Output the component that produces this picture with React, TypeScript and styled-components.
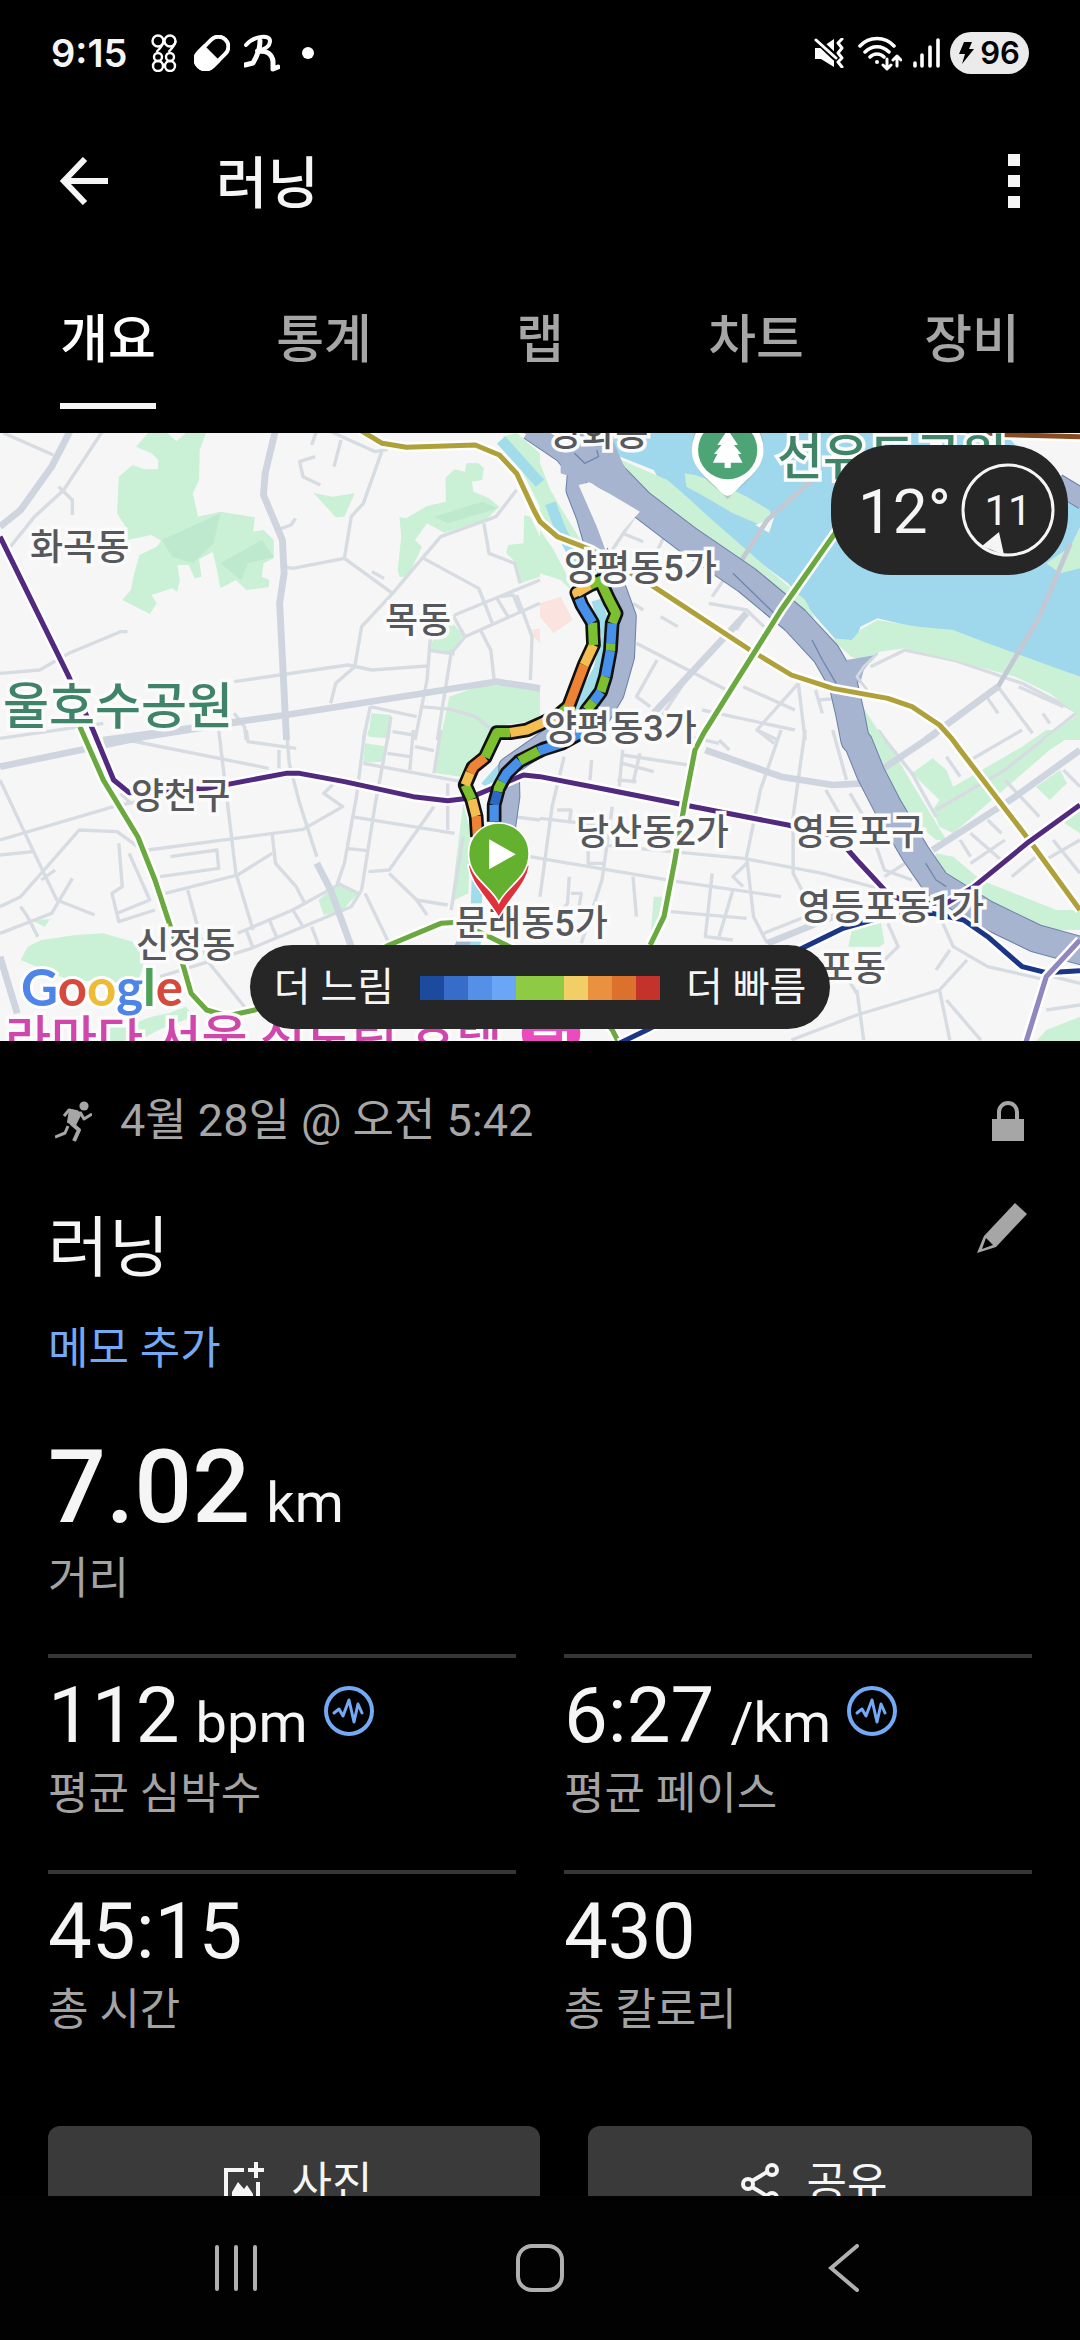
import React from "react";
import styled, { createGlobalStyle } from "styled-components";

const GlobalStyle = createGlobalStyle`
  *, *::before, *::after { box-sizing: border-box; }
  body {
    margin: 0;
    background: #000;
    color: #f5f5f5;
    font-family: Roboto, "Noto Sans CJK KR", sans-serif;
  }
  button { font: inherit; color: inherit; background: none; border: 0; padding: 0; margin: 0; }
  svg { display: block; }
`;

const Screen = styled.div`
  display: flex;
  flex-direction: column;
  height: 100vh;
  overflow: hidden;
  background: #000;
`;

/* ---------- status bar ---------- */

const StatusBar = styled.div`
  display: flex;
  align-items: center;
  justify-content: space-between;
  flex: none;
  height: 106px;
  padding: 0 51px;
`;

const StatusGroup = styled.div<{ $gap: number }>`
  display: flex;
  align-items: center;
  gap: ${(p) => p.$gap}px;
`;

const Clock = styled.time`
  width: 85px;
  font: 600 38px/48px Inter, Roboto, sans-serif;
`;

const Battery = styled.div`
  display: flex;
  align-items: center;
  justify-content: center;
  gap: 6px;
  width: 79px;
  height: 42px;
  border-radius: 21px;
  background: #ebebeb;
  color: #000;
  font: 600 31px/42px Inter, Roboto, sans-serif;
`;

/* ---------- header and tabs ---------- */

const Header = styled.header`
  display: flex;
  align-items: center;
  flex: none;
  height: 150px;
  padding: 0 48px;
`;

const IconButton = styled.button`
  display: flex;
  align-items: center;
  justify-content: center;
  flex: none;
`;

const BackButton = styled(IconButton)`
  width: 72px;
  height: 72px;
`;

const MoreButton = styled(IconButton)`
  flex-direction: column;
  gap: 9px;
  width: 36px;
  height: 72px;
`;

const Square = styled.span`
  width: 12px;
  height: 12px;
  background: #f5f5f5;
`;

const ScreenTitle = styled.h1`
  flex: 1;
  margin: 0 0 0 96px;
  padding-top: 5px;
  font-size: 56px;
  line-height: 72px;
  font-weight: 500;
`;

const Tabs = styled.nav`
  display: grid;
  grid-template-columns: repeat(5, 1fr);
  justify-items: center;
  flex: none;
  height: 177px;
  padding-top: 49px;
`;

const Tab = styled.button<{ $active?: boolean }>`
  display: flex;
  flex-direction: column;
  height: 104px;
  font-size: 52px;
  line-height: 72px;
  font-weight: 500;
  color: ${(p) => (p.$active ? "#fff" : "#a6a6a6")};
  border-bottom: 6px solid ${(p) => (p.$active ? "#f5f5f5" : "transparent")};
`;

/* ---------- map ---------- */

const Scroll = styled.main`
  flex: 1;
  min-height: 0;
  overflow: hidden;
`;

const MapBox = styled.section`
  position: relative;
  width: 100%;
  aspect-ratio: 1080 / 608;
  overflow: hidden;
  background: #f6f6f7;
`;

const MapDrawing = styled.svg`
  width: 100%;
  height: 100%;
`;

type LabelKind = "area" | "park" | "hotel";

const labelColors: Record<LabelKind, string> = {
  area: "#57585c",
  park: "#3f8468",
  hotel: "#cf46ac",
};

const MapLabel = styled.span<{ $x: number; $y: number; $kind: LabelKind }>`
  position: absolute;
  left: ${(p) => (p.$x / 1080) * 100}%;
  top: ${(p) => (p.$y / 608) * 100}%;
  transform: translateY(-50%);
  white-space: nowrap;
  font-size: ${(p) => (p.$kind === "area" ? 36 : 50)}px;
  line-height: 1;
  font-weight: 500;
  color: ${(p) => labelColors[p.$kind]};
  -webkit-text-stroke: 7px #fbfbfb;
  paint-order: stroke fill;
`;

const GoogleMark = styled.div`
  position: absolute;
  left: 21px;
  bottom: 22px;
  font: 700 51px/64px Lato, sans-serif;
  -webkit-text-stroke: 6px #fff;
  paint-order: stroke fill;
`;

const Letter = styled.span<{ $color: string }>`
  color: ${(p) => p.$color};
`;

const Weather = styled.div`
  position: absolute;
  top: 12px;
  right: 12px;
  display: flex;
  align-items: center;
  justify-content: space-between;
  width: 237px;
  height: 130px;
  padding: 0 12px 0 27px;
  border-radius: 60px;
  background: #262626;
`;

const Temperature = styled.span`
  padding-top: 4px;
  font-size: 62px;
  line-height: 72px;
`;

const Wind = styled.div`
  position: relative;
  display: flex;
  align-items: center;
  justify-content: center;
  width: 96px;
  height: 96px;
  padding-top: 2px;
  font-size: 42px;
  line-height: 48px;

  svg {
    position: absolute;
    inset: 0;
  }
`;

const Legend = styled.div`
  position: absolute;
  left: 50%;
  bottom: 12px;
  transform: translateX(-50%);
  display: flex;
  align-items: center;
  justify-content: center;
  gap: 26px;
  width: 580px;
  height: 84px;
  padding-top: 2px;
  border-radius: 42px;
  background: #262626;
  font-size: 40px;
  line-height: 48px;
  white-space: nowrap;
`;

const Scale = styled.div`
  display: flex;
`;

const Step = styled.span<{ $color: string }>`
  width: 24px;
  height: 24px;
  background: ${(p) => p.$color};
`;

const paceColors = [
  "#1b4a9e", "#376dc9", "#5590e8", "#6aa5f6", "#8fca45",
  "#8fca45", "#f2cf66", "#ea913f", "#dc712e", "#c4322c",
];

/* The map is drawn in four tiles; each run of points is local to one tile. */
const tileOrigin = [[0, -9], [1568, -9], [0, 891], [1568, 891]];
type Run = [number, string];

const trace = (...runs: Run[]) =>
  runs
    .map(([tile, points]) =>
      points
        .split(" ")
        .map((pair) => {
          const [x, y] = pair.split(",").map(Number);
          return `${x + tileOrigin[tile][0]},${y + tileOrigin[tile][1]}`;
        })
        .join(" ")
    )
    .join(" ");

const parks: Run[] = [
  [0, "430,9 395,50 440,70 460,90 458,118 420,118 385,105 345,140 340,250 365,290 370,330 440,315 468,332 455,350 405,375 390,430 380,480 355,510 435,552 455,520 440,495 500,475 515,485 522,450 515,405 548,405 565,445 585,440 578,388 618,365 630,420 640,475 685,450 715,480 780,472 782,450 760,440 765,400 795,385 795,330 765,300 735,305 740,262 640,245 575,260 560,190 578,150 580,60 598,9 540,9 512,34 485,9"],
  [0, "910,188 965,200 1030,190 1000,260 975,262"],
  [0, "1160,262 1180,265 1240,228 1295,215 1293,145 1320,118 1350,125 1355,100 1390,100 1405,115 1400,150 1370,155 1375,185 1420,205 1450,230 1410,270 1290,308 1240,280 1205,330 1225,350 1185,440 1160,440 1155,420 1165,320"],
  [0, "1522,255 1540,260 1568,320 1568,440 1510,460 1490,390 1470,370 1475,345 1520,340"],
  [0, "1310,575 1345,615 1310,670 1250,660 1258,625"],
  [0, "1305,800 1400,765 1568,770 1568,870 1430,890 1400,930 1278,930"],
  [0, "1078,850 1135,855 1130,925 1070,920"],
  [0, "1460,20 1500,9 1568,70 1568,230 1500,90"],
  [1, "0,100 30,180 70,250 130,350 70,335 30,310 0,260"],
  [1, "0,300 40,360 75,430 90,480 60,450 0,430"],
  [2, "1278,0 1425,0 1385,90 1340,140 1265,130"],
  [2, "1070,0 1120,0 1118,22 1066,16"],
  [2, "1060,40 1115,48 1112,95 1055,98"],
  [2, "985,458 1040,490 990,545 940,555 925,510"],
  [2, "60,690 80,650 120,630 220,615 300,610 400,640 420,690 400,760 200,750 130,720"],
  [2, "90,570 145,568 130,590"],
  [2, "390,880 440,860 490,850 540,830 560,860 460,900 400,934"],
  [2, "320,870 390,870 390,934 320,934"],
  [2, "1345,220 1365,300 1360,490 1310,515"],
  [3, "1080,130 1140,85 1180,120 1200,170 1400,50 1470,0 1568,0 1480,60 1200,310 1160,290 1140,240 1160,210"],
  [3, "1440,170 1510,120 1530,160 1480,210"],
  [3, "1150,370 1200,380 1280,450 1500,540 1568,540 1568,600 1440,600 1280,500 1140,400"],
  [3, "945,0 990,0 1080,160 1180,330 1150,330 1050,240 985,120"],
  [3, "910,580 990,575 1000,640 985,650 895,650"],
  [3, "1470,900 1568,860 1568,935 1440,935"],
  [3, "1510,270 1568,240 1568,310"],
  [3, "330,500 355,500 340,600 320,640"],
];

const riverParks: Run[] = [
  [1, "215,80 370,150 415,190 500,270 600,360 700,450 770,510 800,570 700,490 560,390 400,300 280,180"],
  [1, "420,130 450,135 520,160 600,200 665,240 675,260 640,285 560,250 470,195 425,170"],
  [1, "930,600 980,570 1100,590 1200,600 1300,640 1568,740 1568,860 1480,790 1380,740 1200,690 1060,655 985,665 960,700 905,680 860,640 850,625 905,630"],
  [1, "1568,290 1540,350 1470,400 1510,430 1568,415"],
  [1, "930,820 1000,930 945,930"],
  [1, "1568,850 1500,900 1460,930 1568,930"],
];

const parkShades: Run[] = [
  [0, "470,330 640,250 620,340 560,400 500,380"],
  [0, "640,400 760,330 795,380 720,400 700,450"],
  [0, "1260,260 1400,215 1445,235 1300,280"],
];

const wideRoads: Run[] = [
  [0, "205,0 150,110 60,240 0,290"],
  [0, "800,0 770,130 765,195 820,330 825,430 812,520 832,930"],
  [0, "300,930 830,855 1230,790 1440,755 1568,775"],
  [2, "0,110 420,20 700,-25"],
  [3, "480,60 700,140 850,165 940,160"],
  [1, "600,550 330,850"],
  [1, "1330,770 1120,930"],
  [3, "990,120 1150,10"],
  [3, "1140,360 1380,200 1568,60"],
  [2, "0,680 50,850"],
  [2, "920,400 960,480 1020,650"],
  [3, "660,640 900,540"],
];

const roads: Run[] = [
  [0, "10,9 155,75"], [0, "300,0 185,180 100,260 30,350"], [0, "170,170 210,210 210,255"],
  [0, "1110,60 1055,220 1020,260 1000,385 850,415 825,410"],
  [0, "1000,385 1140,490 1050,590 1030,710 975,760 960,820"],
  [0, "950,0 1090,65 1125,58"], [0, "990,30 970,110"], [0, "915,80 870,95 880,140 930,165"], [0, "905,45 920,0"],
  [0, "1500,180 1440,260 1280,320 1230,380 1140,490"], [0, "1230,385 1390,475 1430,580"],
  [0, "1405,280 1420,370 1495,400 1510,460"], [0, "1320,555 1568,450"], [0, "1350,620 1568,520"],
  [0, "1315,555 1350,620 1310,670 1285,830 1270,930"], [0, "1250,620 1240,750 1205,930"],
  [0, "0,730 115,720 200,670 350,605 370,605"], [0, "680,755 1010,705 1080,720 1240,708"],
  [0, "1395,600 1425,660 1435,750"], [0, "1500,495 1545,620 1540,750"], [0, "1440,500 1475,560"],
  [0, "1455,500 1490,495 1510,545"], [0, "1250,662 1320,672"], [0, "810,298 845,285 858,265"],
  [0, "1080,425 1115,445"], [0, "1075,830 1210,860"], [0, "1075,830 1055,930"], [0, "1135,860 1125,930"],
  [0, "1220,830 1310,838 1380,860 1430,900"], [0, "1140,905 1200,915"], [0, "680,850 710,890 715,930"], [0, "0,925 300,880"],
  [2, "832,0 840,100 870,220 920,380"], [2, "0,150 100,370 165,510 275,555"], [2, "0,330 330,230 420,210"],
  [2, "0,375 95,365"], [2, "0,530 60,500 230,300 340,305 400,350"], [2, "430,360 880,298 995,230 940,190 980,150"],
  [2, "635,0 685,430 735,600"], [2, "370,30 780,115"], [2, "810,60 810,115"], [2, "715,0 720,35 860,55"],
  [2, "495,380 630,360 635,415 465,440"], [2, "480,490 690,435 790,370"], [2, "790,310 800,400 860,470 885,520"],
  [2, "345,340 355,470 325,490 345,575 450,540"], [2, "375,370 435,510 340,550"], [2, "545,480 600,690 710,830"],
  [2, "690,610 850,540 990,460"], [2, "465,740 730,655 880,590 1020,530 1050,480"], [2, "0,610 100,570 150,550 210,445"],
  [2, "60,530 80,560 110,620"], [2, "160,420 120,450"], [2, "1060,0 1035,200 1000,400 980,460 1040,490"],
  [2, "1130,0 1090,220 1050,480"], [2, "1200,0 1190,120"], [2, "1280,0 1260,130"], [2, "1055,100 1340,155"],
  [2, "1020,260 1320,310"], [2, "1005,355 1065,362"], [2, "1125,70 1190,80"], [2, "1205,50 1260,62"],
  [2, "1070,425 1130,420 1260,230"], [2, "1130,430 1210,510 1300,525"], [2, "1060,490 1130,640"], [2, "1300,160 1300,300"],
  [2, "1345,320 1310,540"], [2, "1210,510 1240,555"], [2, "780,565 805,625"], [2, "850,540 880,590"], [2, "715,600 735,655"],
  [2, "905,590 925,645"], [2, "380,220 350,190"], [2, "1490,260 1568,270"], [2, "1540,380 1568,385"],
  [1, "280,250 210,360"], [1, "365,310 290,470"], [1, "240,310 300,335"], [1, "500,500 540,440"],
  [1, "280,640 560,790"], [1, "340,690 280,800 320,830"], [1, "430,740 340,880"], [1, "590,770 740,840"],
  [1, "470,840 740,900"], [1, "750,760 770,930"], [1, "750,760 630,900 690,930"], [1, "350,560 400,590"],
  [1, "800,780 820,850"], [1, "810,810 860,805"], [1, "960,710 1060,660 1200,690 1400,760 1568,850"],
  [1, "1330,770 1430,910"], [1, "1390,770 1520,830"], [1, "1290,790 1330,850"], [1, "1460,850 1480,880"],
  [1, "490,520 600,540 650,590"], [1, "1480,30 1500,120 1568,130"], [1, "270,520 300,540"], [1, "600,550 570,600"],
  [3, "770,0 735,260 735,430 765,490"], [3, "700,0 640,180 600,380 620,560 660,640"], [3, "600,400 560,440 590,470"],
  [3, "630,0 680,40"], [3, "70,80 35,230 0,500"], [3, "240,60 230,170"], [3, "290,70 270,160"], [3, "210,230 180,450 120,640"],
  [3, "0,265 210,290"], [3, "0,385 400,455 700,500"], [3, "130,340 590,385 820,430 1000,480"], [3, "140,350 140,400 190,400"],
  [3, "270,440 280,560"], [3, "500,430 480,620 560,630"], [3, "560,480 520,620"], [3, "380,545 600,565"],
  [3, "240,75 430,105"], [3, "240,100 330,125"], [3, "225,150 280,155"], [3, "150,90 145,150"], [3, "85,440 80,520 50,560"],
  [3, "90,490 120,490 110,550"], [3, "50,240 90,240 85,280"], [3, "650,610 770,560"], [3, "830,180 880,270"],
  [3, "850,0 890,150"], [3, "900,190 940,260"], [3, "960,300 1000,420 1080,450"], [3, "1000,440 1060,400"],
  [3, "1170,580 1200,650 1300,710 1470,750"], [3, "1240,690 1160,780 920,855 730,930"], [3, "920,780 940,930"],
  [3, "1160,780 1190,930"], [3, "1180,810 1280,930"], [3, "890,740 920,790"], [3, "1490,740 1568,760"], [3, "1470,840 1568,825"],
  [3, "1010,580 1040,650 1000,690"], [3, "1190,660 1150,720"], [3, "980,0 1080,130 1150,260"], [3, "1150,240 1350,120 1568,-60"],
  [3, "1250,90 1400,0"], [3, "1180,80 1220,140"], [3, "1220,330 1250,380"], [3, "1250,310 1350,400"], [3, "1300,270 1340,310"],
  [3, "1350,330 1250,400"], [3, "1350,150 1450,260"], [3, "1450,400 1568,330"], [3, "1490,330 1568,430"],
  [3, "1520,120 1568,170"], [3, "1370,440 1440,380"], [3, "520,30 550,60"], [3, "430,20 520,40"],
];

const expressways: Run[][] = [
  [[1, "150,70 215,140 290,220 430,330 600,450 740,570 830,670 880,760 900,850 915,930"], [3, "925,40 960,130 1010,230 1090,370 1150,460 1290,550 1440,625 1600,670"]],
  [[1, "-30,0 70,70 110,120 105,180 135,260 160,350 215,460 250,560 245,680 215,790 175,860"], [3, "60,0 -20,60 -90,110"], [2, "1480,200 1465,310"]],
  [[1, "1500,160 1580,210"]],
];

const creek: Run[] = [
  [0, "1455,30 1568,160"], [1, "30,220 60,300 110,400"], [1, "165,510 195,620 170,720 110,830 0,900"],
  [2, "1540,60 1470,100 1410,170"], [2, "1390,280 1380,640 1370,700"],
];

const subways: { color: string; runs: Run[] }[] = [
  { color: "#69a93f", runs: [[0, "228,890"], [2, "232,-10 300,150 400,320 450,450 495,590 530,700 555,790 600,840 660,858 740,840 1000,720 1130,645 1280,580 1330,577 1400,610 1480,650"], [3, "100,760 210,900 230,940"]] },
  { color: "#b0a03a", runs: [[0, "1045,0 1110,40 1180,52 1380,45 1450,75 1500,130 1550,240"], [1, "0,275 50,320 150,360 330,470 610,660 730,735 850,775 1010,805 1080,830 1160,885 1195,925"], [3, "1220,60 1420,330 1568,540"]] },
  { color: "#512a80", runs: [[0, "0,320 200,740 270,900"], [2, "290,50 330,150 375,188 600,175 830,130 870,130 1000,155 1200,200 1300,212 1360,205 1440,170 1520,135"], [3, "0,140 200,180 420,225 720,285 860,320 920,390 1010,490 1070,520 1180,520 1260,470 1420,335 1568,225"]] },
  { color: "#69a93f", runs: [[1, "870,290 700,540 560,770 475,910"], [3, "450,60 420,220 390,400 360,560 320,645"]] },
  { color: "#1c3686", runs: [[3, "230,940 310,900 770,650 880,595 1000,560 1140,550 1230,570 1300,620 1400,710 1470,728 1568,722"]] },
  { color: "#8f87bd", runs: [[3, "1410,940 1470,740 1568,630"]] },
  { color: "#8a4a20", runs: [[1, "1200,-2 1350,14 1568,20"]] },
];

const G = "#7cc02f";
const B = "#4791ea";
const Y = "#f4bf50";
const O = "#ec8434";

const routeOutline =
  "142,860 138,800 125,750 105,705 128,652 165,622 200,548 240,548 290,540 330,522 385,495 415,470 462,345 490,285 487,218 455,165 440,128 480,105 510,92 537,150 558,190 546,220 541,300 526,380 512,425 490,455 470,480 440,555 395,580 340,597 268,633 230,670 205,715 192,765 192,815";

const routeSegments: [string, string][] = [
  [O, "142,860 138,798"], [Y, "138,798 125,748"], [G, "125,748 105,705"], [Y, "105,705 120,668"], [O, "120,668 130,650 165,622"],
  [G, "165,622 200,548 240,548"], [Y, "240,548 290,540 330,522 385,495"], [G, "385,495 415,470"], [O, "415,470 462,345"],
  [Y, "462,345 490,285"], [G, "490,285 487,218"], [B, "487,218 455,165 447,145"], [Y, "445,138 440,128 480,105"],
  [G, "480,105 510,92 537,150 558,190 546,220"], [B, "546,220 542,280"], [G, "542,280 541,302"], [B, "541,302 526,380"],
  [G, "526,380 512,425"], [B, "512,425 490,455"], [G, "490,455 470,480"], [B, "470,480 440,555 395,580 325,603"],
  [G, "325,603 268,633"], [B, "268,633 230,670 215,695"], [G, "215,695 205,715 203,725"], ["#2d68c4", "203,725 192,765"], [B, "192,765 192,815"],
];

const areaLabels: [string, number, number, LabelKind][] = [
  ["화곡동", 30, 115, "area"],
  ["목동", 385, 188, "area"],
  ["울호수공원", 3, 274, "park"],
  ["양천구", 131, 364, "area"],
  ["신정동", 136, 513, "area"],
  ["라마다 서울 신도림 호텔", 5, 607, "hotel"],
  ["선유도공원", 777, 25, "park"],
  ["양화동", 549, 1, "area"],
  ["양평동5가", 564, 136, "area"],
  ["양평동3가", 544, 296, "area"],
  ["당산동2가", 576, 400, "area"],
  ["영등포구", 792, 400, "area"],
  ["영등포동1가", 798, 475, "area"],
  ["문래동5가", 455, 491, "area"],
  ["포동", 820, 536, "area"],
];

const Polygons = ({ shapes, fill }: { shapes: Run[]; fill: string }) => (
  <g fill={fill}>
    {shapes.map((s, i) => (
      <polygon key={i} points={trace(s)} />
    ))}
  </g>
);

const Lines = ({ lines, color, width }: { lines: Run[]; color: string; width: number }) => (
  <g stroke={color} strokeWidth={width} fill="none" strokeLinejoin="round">
    {lines.map((s, i) => (
      <polyline key={i} points={trace(s)} />
    ))}
  </g>
);

const RouteMap = () => (
  <MapDrawing viewBox="0 0 3136 1824" preserveAspectRatio="none" aria-hidden="true">
    <Polygons shapes={parks} fill="#caf0d6" />
    <Polygons shapes={parkShades} fill="#bfe9ce" />
    <Polygons shapes={[[0, "1460,740 1568,720 1568,690 1500,700"]]} fill="#f6f6f7" />
    <Polygons shapes={[[0, "1545,600 1568,595 1568,640 1550,620"], [1, "0,520 60,500 95,570 40,610 0,560"]]} fill="#fbe3df" />
    <Lines lines={roads} color="#d7dce2" width={10} />
    <Lines lines={wideRoads} color="#ced5de" width={20} />
    <Polygons
      shapes={[[1, "180,0 1568,0 1568,740 1300,650 1100,595 980,565 930,590 905,680 860,630 800,560 720,460 500,290 370,190 330,120 220,75"]]}
      fill="#9fd8ec"
    />
    <Polygons shapes={[[1, "1340,0 1568,0 1568,230 1500,180"]]} fill="#f6f6f7" />
    <Polygons shapes={riverParks} fill="#caf0d6" />
    <Polygons shapes={[[1, "625,285 680,262 665,308"]]} fill="#f6f6f7" />
    <Lines lines={[[1, "580,400 660,270 790,150"], [1, "1540,340 1450,560 1330,770"]]} color="#c3c8d3" width={14} />
    <Lines lines={creek} color="#a1dcea" width={32} />
    <g fill="none" strokeLinejoin="round">
      {expressways.map((runs, i) => (
        <polyline key={i} points={trace(...runs)} stroke="#6d81a8" strokeWidth={i === 0 ? 86 : 62} />
      ))}
      {expressways.map((runs, i) => (
        <polyline key={i} points={trace(...runs)} stroke="#a6b4d0" strokeWidth={i === 0 ? 80 : 56} />
      ))}
    </g>
    <Polygons shapes={[[1, "-60,0 200,0 240,100 290,190 250,230 150,160 60,130 60,80"], [1, "890,690 975,675 940,720 930,760 900,740"]]} fill="#a6b4d0" />
    <Polygons shapes={[[1, "112,165 140,158 200,190 290,245 190,360 165,290"]]} fill="#f6f6f7" />
    <Lines lines={[[1, "560,430 620,490 680,550"], [1, "790,630 820,690 860,760"], [3, "1120,400 1150,450 1180,470"], [1, "100,70 130,100 170,80 165,60"]]} color="#7286ad" width={4} />
    <Lines lines={[[1, "950,780 920,740 940,710 980,670"]]} color="#d3d9e0" width={8} />
    <Polygons shapes={[[2, "1340,600 1400,520 1360,660 1310,670"]]} fill="#a6b4d0" />
    {subways.map((line, i) => (
      <g key={i} fill="none" strokeLinejoin="round">
        <polyline points={trace(...line.runs)} stroke="#fff" strokeWidth={30} />
        <polyline points={trace(...line.runs)} stroke={line.color} strokeWidth={15} />
      </g>
    ))}
    <g transform="translate(1249 351) scale(0.968 1)" fill="none" strokeLinejoin="round">
      <polyline points={routeOutline} stroke="#111" strokeWidth={44} />
      {routeSegments.map(([color, points], i) => (
        <polyline key={i} points={points} stroke={color} strokeWidth={28} />
      ))}
    </g>
    <path d="M2113 199c-20 -30 -104 -70 -104 -160a104 108 0 0 1 208 0c0 90 -84 130 -104 160z" fill="#9aa" opacity=".5" />
    <path d="M2113 188c-12 0 -22 -12 -34 -26C2050 130 2009 105 2009 50a104 108 0 0 1 208 0c0 55 -41 80 -70 112c-12 14 -22 26 -34 26z" fill="#fff" />
    <ellipse cx="2113" cy="51" rx="86" ry="88" fill="#4da576" />
    <path d="M2113 -10l-30 46h12l-22 27h10l-13 26h34v16h18v-16h34l-13 -26h10l-22 -27h12z" fill="#fff" />
    <ellipse cx="1600" cy="1800" rx="85" ry="85" fill="#ea4cc0" />
    <path d="M1550 1795h65v12h-65zM1632 1795h14v40h-14z" fill="#fff" />
  </MapDrawing>
);

const PinLayer = styled(MapDrawing)`
  position: absolute;
  inset: 0;
`;

const StartPin = () => (
  <PinLayer viewBox="0 0 3136 1824" preserveAspectRatio="none" aria-hidden="true">
    <g transform="translate(1249 351) scale(0.968 1)" stroke="#fff" strokeWidth={5}>
      <path d="M113 945C122 1000 160 1030 206 1103C250 1030 290 1000 299 945Z" fill="#e0303c" />
      <path d="M206 1058C180 1005 115 985 115 910a91 91 0 0 1 182 0C297 985 232 1005 206 1058Z" fill="#63b12e" />
      <path d="M177 868v90l80 -45z" fill="#fff" stroke="none" />
    </g>
  </PinLayer>
);

/* ---------- activity details ---------- */

const Details = styled.section`
  display: flex;
  flex-direction: column;
  padding: 50px 48px 0;
`;

const DateRow = styled.div`
  display: flex;
  align-items: center;
  gap: 28px;
  height: 60px;
  padding: 0 8px 0 7px;
  font-size: 45px;
  line-height: 60px;
  color: #a6a6a6;

  time { flex: 1; }
`;

const TitleRow = styled.div`
  display: flex;
  align-items: flex-start;
  justify-content: space-between;
  height: 92px;
  margin-top: 52px;
  padding-right: 5px;
`;

const ActivityName = styled.h2`
  margin: 0;
  font-size: 66px;
  line-height: 92px;
  font-weight: 400;
`;

const MemoLink = styled.a`
  align-self: flex-start;
  margin-top: 24px;
  font-size: 44px;
  line-height: 60px;
  color: #74a9f5;
  text-decoration: none;
`;

const Stats = styled.dl`
  display: grid;
  grid-template-columns: 1fr 1fr;
  column-gap: 48px;
  margin: 0;
`;

const Stat = styled.div<{ $main?: boolean }>`
  display: flex;
  flex-direction: column;
  grid-column: ${(p) => (p.$main ? "1 / -1" : "auto")};
  height: ${(p) => (p.$main ? 275 : 216)}px;
  padding-top: ${(p) => (p.$main ? 46 : 10)}px;
  border-top: ${(p) => (p.$main ? "0" : "4px solid #363636")};
`;

const Value = styled.dd<{ $main?: boolean }>`
  display: flex;
  align-items: baseline;
  gap: 16px;
  order: 1;
  margin: 0;
  font-size: ${(p) => (p.$main ? 102 : 78)}px;
  line-height: ${(p) => (p.$main ? 124 : 96)}px;
  font-weight: ${(p) => (p.$main ? 500 : 400)};
`;

const Unit = styled.span`
  font-size: 56px;
  line-height: 60px;
  font-weight: 400;
`;

const Caption = styled.dt`
  order: 2;
  font-size: 44px;
  line-height: 60px;
  color: #a3a3a3;
`;

const ZoneIcon = styled.svg`
  align-self: flex-start;
  margin-top: 18px;
`;

const Actions = styled.div`
  display: grid;
  grid-template-columns: 492fr 444fr;
  gap: 48px;
  margin-top: 40px;
`;

const Action = styled.button`
  display: flex;
  align-items: center;
  justify-content: center;
  gap: 28px;
  height: 116px;
  padding-left: 8px;
  border-radius: 12px;
  background: #3a3a3a;
  font-size: 44px;
  line-height: 60px;
`;

/* ---------- system navigation ---------- */

const SystemNav = styled.nav`
  display: grid;
  grid-template-columns: repeat(3, 1fr);
  justify-items: center;
  align-items: center;
  flex: none;
  height: 144px;
  padding: 0 84px;
  background: #020202;
`;

const Zone = () => (
  <ZoneIcon width="50" height="50" viewBox="0 0 50 50" fill="none" stroke="#74a9f5" aria-hidden="true">
    <circle cx="25" cy="25" r="23" strokeWidth="4" />
    <path d="M10 27l5-4 4 7 6-16 5 22 4-18 4 9" strokeWidth="3" strokeLinejoin="round" strokeLinecap="round" />
  </ZoneIcon>
);

type StatData = { label: string; value: string; unit?: string; zone?: boolean; main?: boolean };

const stats: StatData[] = [
  { label: "거리", value: "7.02", unit: "km", main: true },
  { label: "평균 심박수", value: "112", unit: "bpm", zone: true },
  { label: "평균 페이스", value: "6:27", unit: "/km", zone: true },
  { label: "총 시간", value: "45:15" },
  { label: "총 칼로리", value: "430" },
];

export default function App() {
  return (
    <Screen>
      <GlobalStyle />
      <StatusBar>
        <StatusGroup $gap={14}>
          <Clock>9:15</Clock>
          <svg width="30" height="38" viewBox="0 0 30 38" fill="none" stroke="#fff" strokeWidth="2.4">
            <circle cx="8" cy="7" r="5.5" />
            <circle cx="20" cy="7" r="5.5" />
            <path d="M13.500 7c0 4-4 8-7 11M25.500 7c0 4-4 8-7 11" />
            <circle cx="8" cy="23" r="4" />
            <circle cx="20" cy="23" r="4" />
            <circle cx="8" cy="32" r="5" />
            <circle cx="20" cy="32" r="5" />
          </svg>
          <svg width="36" height="36" viewBox="0 0 36 36" fill="none">
            <g transform="rotate(45 18 18)">
              <rect x="8" y="-1" width="20" height="38" rx="10" stroke="#fff" strokeWidth="4" />
              <path d="M6 18h24v9a12 12 0 0 1-24 0z" fill="#fff" />
            </g>
          </svg>
          <svg width="36" height="38" viewBox="2 0 36 38" fill="none" stroke="#fff" strokeWidth="4" strokeLinecap="round" strokeLinejoin="round">
            <path d="M4 11C12 2 28 0 28 7c0 6-7 9-13 10" />
            <path d="M18 7c0 8-4 17-7 22l-8 2M17 17c10 0 13 4 14 10 0 4 0 6 0 8l5-2" strokeWidth="5" />
          </svg>
          <svg width="24" height="12" viewBox="0 0 24 12">
            <circle cx="14" cy="6" r="6" fill="#fff" />
          </svg>
        </StatusGroup>
        <StatusGroup $gap={10}>
          <svg width="34" height="30" viewBox="0 0 34 30" fill="#fff">
            <path d="M1 10h6L20 1v28L7 21H1z" />
            <path d="M2 1l20 19" stroke="#000" strokeWidth="7" />
            <path d="M2 2l20 18" stroke="#fff" strokeWidth="3" strokeLinecap="round" />
            <path d="M28 1l-4 4 4 5-4 5 4 5-4 4 4 5" fill="none" stroke="#fff" strokeWidth="3" strokeLinejoin="round" strokeLinecap="round" />
          </svg>
          <svg width="44" height="36" viewBox="0 0 44 36" fill="none" stroke="#fff" strokeWidth="3.500" strokeLinecap="round">
            <path d="M2 11c9-10 25-10 34 0M7 17c7-7 17-7 24 0M12 22c4-4 10-4 14 0" />
            <circle cx="19" cy="27" r="2" fill="#fff" stroke="none" />
            <path d="M29 24v10m-4-4l4 4 4-4M39 31V21m-4 4l4-4 4 4" strokeWidth="3" strokeLinejoin="round" />
          </svg>
          <svg width="28" height="30" viewBox="0 0 28 30" stroke="#fff" strokeWidth="3.600" strokeLinecap="round">
            <path d="M3 25v3M10 17v11M18 9v19M26 2v26" />
          </svg>
          <Battery>
            <svg width="15" height="22" viewBox="0 0 15 22">
              <path d="M5 0h8l-3 7h5L3 22l3-10H0z" fill="#000" />
            </svg>
            96
          </Battery>
        </StatusGroup>
      </StatusBar>

      <Header>
        <BackButton aria-label="뒤로">
          <svg width="48" height="48" viewBox="0 0 48 48" fill="none" stroke="#f5f5f5" strokeWidth="6">
            <path d="M25 2L4 24l21 22M4 24h44" />
          </svg>
        </BackButton>
        <ScreenTitle>러닝</ScreenTitle>
        <MoreButton aria-label="더보기">
          <Square />
          <Square />
          <Square />
        </MoreButton>
      </Header>

      <Tabs>
        <Tab $active>개요</Tab>
        <Tab>통계</Tab>
        <Tab>랩</Tab>
        <Tab>차트</Tab>
        <Tab>장비</Tab>
      </Tabs>

      <Scroll>
        <MapBox>
          <RouteMap />
          {areaLabels.map(([name, x, y, kind]) => (
            <MapLabel key={name} $x={x} $y={y} $kind={kind}>{name}</MapLabel>
          ))}
          <StartPin />
          <GoogleMark>
            <Letter $color="#4f84e8">G</Letter>
            <Letter $color="#d64a3e">o</Letter>
            <Letter $color="#eebb36">o</Letter>
            <Letter $color="#4f84e8">g</Letter>
            <Letter $color="#4da257">l</Letter>
            <Letter $color="#d64a3e">e</Letter>
          </GoogleMark>
          <Weather>
            <Temperature>12°</Temperature>
            <Wind>
              <svg width="96" height="96" viewBox="0 0 96 96">
                <circle cx="48" cy="48" r="45" fill="none" stroke="#f5f5f5" strokeWidth="3" />
                <path d="M22 84l17-14 5 23z" fill="#f5f5f5" />
              </svg>
              11
            </Wind>
          </Weather>
          <Legend>
            더 느림
            <Scale>
              {paceColors.map((color, i) => (
                <Step key={i} $color={color} />
              ))}
            </Scale>
            더 빠름
          </Legend>
        </MapBox>

        <Details>
          <DateRow>
            <svg width="37" height="41" viewBox="0 0 37 41" fill="none" stroke="#a6a6a6" strokeLinejoin="round">
              <circle cx="29" cy="5" r="4.600" fill="#a6a6a6" stroke="none" />
              <path d="M9 15l5-6 9 2M25 11l4 7 8-5" strokeWidth="3" />
              <path d="M15 9l11 3-6 12-7-3z" fill="#a6a6a6" strokeWidth="2" />
              <path d="M16 22l8 7-5 11" strokeWidth="4" />
              <path d="M13 25l-3 7L0 36" strokeWidth="3" />
            </svg>
            <time>4월 28일 @ 오전 5:42</time>
            <svg width="32" height="40" viewBox="0 0 32 40">
              <path d="M7 20v-9a9 9 0 0 1 18 0v9" fill="none" stroke="#a6a6a6" strokeWidth="4" />
              <rect y="18" width="32" height="22" fill="#a6a6a6" />
            </svg>
          </DateRow>
          <TitleRow>
            <ActivityName>러닝</ActivityName>
            <IconButton aria-label="이름 편집">
              <svg width="50" height="50" viewBox="0 0 50 50">
                <path d="M38 0l12 11-31 33-19 6 7-17z" fill="#a6a6a6" />
                <path d="M9 35l7 7-11 4z" fill="#000" />
              </svg>
            </IconButton>
          </TitleRow>
          <MemoLink href="#memo">메모 추가</MemoLink>

          <Stats>
            {stats.map((s) => (
              <Stat key={s.label} $main={s.main}>
                <Caption>{s.label}</Caption>
                <Value $main={s.main}>
                  {s.value}
                  {s.unit && <Unit>{s.unit}</Unit>}
                  {s.zone && <Zone />}
                </Value>
              </Stat>
            ))}
          </Stats>

          <Actions>
            <Action>
              <svg width="40" height="44" viewBox="0 0 40 44" fill="none" stroke="#f5f5f5" strokeWidth="4">
                <path d="M20 8H2v34h32V20M32 0v16M24 8h16" />
                <path d="M8 36V30l6-10 6 7 3-4 6 9v4z" fill="#f5f5f5" stroke="none" />
              </svg>
              사진
            </Action>
            <Action>
              <svg width="38" height="42" viewBox="0 0 38 42" fill="none" stroke="#f5f5f5" strokeWidth="4">
                <circle cx="31" cy="7" r="5" />
                <circle cx="7" cy="21" r="5" />
                <circle cx="31" cy="35" r="5" />
                <path d="M11 18l15-9M11 24l15 9" />
              </svg>
              공유
            </Action>
          </Actions>
        </Details>
      </Scroll>

      <SystemNav>
        <IconButton aria-label="최근 앱">
          <svg width="44" height="48" viewBox="0 0 44 48" stroke="#b0b0b0" strokeWidth="4" strokeLinecap="round">
            <path d="M3 3v42M22 3v42M41 3v42" />
          </svg>
        </IconButton>
        <IconButton aria-label="홈">
          <svg width="48" height="48" viewBox="0 0 48 48">
            <rect x="2" y="2" width="44" height="44" rx="14" fill="none" stroke="#b0b0b0" strokeWidth="4" />
          </svg>
        </IconButton>
        <IconButton aria-label="이전">
          <svg width="32" height="48" viewBox="0 0 32 48" fill="none" stroke="#b0b0b0" strokeWidth="4" strokeLinecap="round">
            <path d="M29 2L3 24l26 22" />
          </svg>
        </IconButton>
      </SystemNav>
    </Screen>
  );
}
